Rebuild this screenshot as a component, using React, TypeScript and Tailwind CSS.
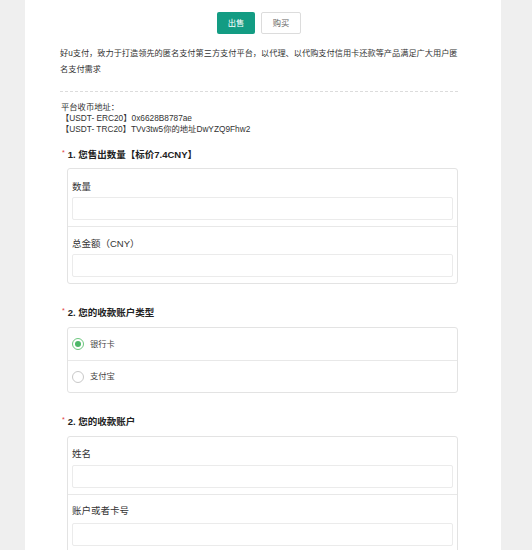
import React from "react";

const font = { fontFamily: '"Liberation Sans", "Noto Sans CJK SC", sans-serif' };

function Heading({ children }: { children: React.ReactNode }) {
  return (
    <div className="flex items-start pl-[2px] text-[9.5px] font-bold leading-[12px] text-[#222]">
      <span className="mr-[3px] -mt-[2px] text-[7px] font-normal text-[#e23b3b]">*</span>
      <span>{children}</span>
    </div>
  );
}

function Field({ label, first }: { label: string; first?: boolean }) {
  return (
    <div className={`px-[4px] pb-[6px] ${first ? "pt-[12px]" : "border-t border-[#e8e8e8] pt-[11px]"}`}>
      <div className="text-[9.5px] leading-[12px] text-[#333]">{label}</div>
      <div className="mt-[4px] h-[23px] rounded-[2px] border border-[#ebebeb] bg-white" />
    </div>
  );
}

function Radio({ label, checked, first }: { label: string; checked?: boolean; first?: boolean }) {
  return (
    <div className={`flex h-[32px] items-center px-[4px] ${first ? "" : "border-t border-[#e8e8e8]"}`}>
      <span
        className={`flex h-[12px] w-[12px] items-center justify-center rounded-full border ${
          checked ? "border-[#6cc77e]" : "border-[#c8c8c8]"
        }`}
      >
        {checked && <span className="h-[6px] w-[6px] rounded-full bg-[#4db868]" />}
      </span>
      <span className="ml-[6px] text-[8.3px] text-[#444]">{label}</span>
    </div>
  );
}

export default function App() {
  return (
    <div className="min-h-screen bg-[#efefef]" style={font}>
      <div className="ml-[25px] min-h-screen w-[476px] bg-white pl-[35px] pr-[43px]">
        <div className="flex justify-center gap-[6px] pt-[12px]">
          <button className="h-[22px] w-[38px] rounded-[2px] bg-[#139c83] text-[8.3px] text-white">出售</button>
          <button className="h-[22px] w-[40px] rounded-[2px] border border-[#dcdcdc] bg-white text-[8.3px] text-[#666]">
            购买
          </button>
        </div>
        <p className="mt-[12px] text-[8.2px] leading-[16px] text-[#333]">
          好u支付，致力于打造领先的匿名支付第三方支付平台，以代理、以代购支付信用卡还款等产品满足广大用户匿名支付需求
        </p>
        <div className="mt-[13px] border-t border-dashed border-[#dcdcdc]" />
        <div className="pl-[1px] pt-[10px] text-[8.3px] leading-[11px] text-[#333]">
          <div>平台收币地址：</div>
          <div>【USDT- ERC20】0x6628B8787ae</div>
          <div>【USDT- TRC20】TVv3tw5你的地址DwYZQ9Fhw2</div>
        </div>

        <div className="mt-[14px]">
          <Heading>1. 您售出数量【标价7.4CNY】</Heading>
        </div>
        <div className="ml-[7px] mt-[7px] rounded-[3px] border border-[#e3e3e3]">
          <Field label="数量" first />
          <Field label="总金额（CNY）" />
        </div>

        <div className="mt-[23px]">
          <Heading>2. 您的收款账户类型</Heading>
        </div>
        <div className="ml-[7px] mt-[8px] rounded-[3px] border border-[#e3e3e3]">
          <Radio label="银行卡" checked first />
          <Radio label="支付宝" />
        </div>

        <div className="mt-[23px]">
          <Heading>2. 您的收款账户</Heading>
        </div>
        <div className="ml-[7px] mt-[8px] rounded-[3px] border border-[#e3e3e3]">
          <div className="px-[4px] pb-[6px] pt-[11px]">
            <div className="text-[9.5px] leading-[12px] text-[#333]">姓名</div>
            <div className="mt-[5px] h-[23px] rounded-[2px] border border-[#ebebeb] bg-white" />
          </div>
          <div className="border-t border-[#e8e8e8] px-[4px] pb-[6px] pt-[10px]">
            <div className="text-[9.5px] leading-[12px] text-[#333]">账户或者卡号</div>
            <div className="mt-[6px] h-[23px] rounded-[2px] border border-[#ebebeb] bg-white" />
          </div>
        </div>
      </div>
    </div>
  );
}
